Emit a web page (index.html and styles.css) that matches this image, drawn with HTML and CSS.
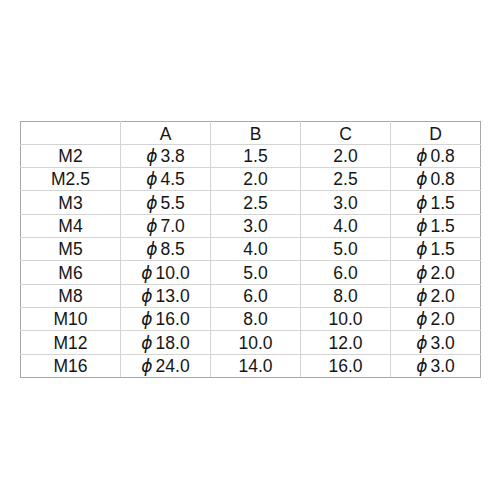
FILE: index.html
```html
<!DOCTYPE html>
<html lang="ja">
<head>
<meta charset="utf-8">
<title>Size table</title>
<link rel="stylesheet" href="styles.css">
</head>
<body>
<main class="page">
  <table class="spec">
    <colgroup>
      <col class="c-size"><col class="c-val"><col class="c-val"><col class="c-val"><col class="c-val">
    </colgroup>
    <thead>
      <tr><th></th><th>A</th><th>B</th><th>C</th><th>D</th></tr>
    </thead>
    <tbody>
      <tr><td>M2</td><td><span class="phi">ϕ</span>3.8</td><td>1.5</td><td>2.0</td><td><span class="phi">ϕ</span>0.8</td></tr>
      <tr><td>M2.5</td><td><span class="phi">ϕ</span>4.5</td><td>2.0</td><td>2.5</td><td><span class="phi">ϕ</span>0.8</td></tr>
      <tr><td>M3</td><td><span class="phi">ϕ</span>5.5</td><td>2.5</td><td>3.0</td><td><span class="phi">ϕ</span>1.5</td></tr>
      <tr><td>M4</td><td><span class="phi">ϕ</span>7.0</td><td>3.0</td><td>4.0</td><td><span class="phi">ϕ</span>1.5</td></tr>
      <tr><td>M5</td><td><span class="phi">ϕ</span>8.5</td><td>4.0</td><td>5.0</td><td><span class="phi">ϕ</span>1.5</td></tr>
      <tr><td>M6</td><td><span class="phi">ϕ</span>10.0</td><td>5.0</td><td>6.0</td><td><span class="phi">ϕ</span>2.0</td></tr>
      <tr><td>M8</td><td><span class="phi">ϕ</span>13.0</td><td>6.0</td><td>8.0</td><td><span class="phi">ϕ</span>2.0</td></tr>
      <tr><td>M10</td><td><span class="phi">ϕ</span>16.0</td><td>8.0</td><td>10.0</td><td><span class="phi">ϕ</span>2.0</td></tr>
      <tr><td>M12</td><td><span class="phi">ϕ</span>18.0</td><td>10.0</td><td>12.0</td><td><span class="phi">ϕ</span>3.0</td></tr>
      <tr><td>M16</td><td><span class="phi">ϕ</span>24.0</td><td>14.0</td><td>16.0</td><td><span class="phi">ϕ</span>3.0</td></tr>
    </tbody>
  </table>
</main>
</body>
</html>
```

FILE: styles.css
```css
html, body {
  margin: 0;
  padding: 0;
  background: #ffffff;
}

.page {
  padding: 121px 0 0 20px;
}

.spec {
  border-collapse: collapse;
  width: 460px;
  height: 257px;
  table-layout: fixed;
  border: 1px solid #a8a8a8;
  font-family: "Liberation Sans", Arial, sans-serif;
  font-size: 17.5px;
  color: #151515;
}

.c-size { width: 100px; }
.c-val { width: 90px; }

.spec th,
.spec td {
  border: 1px solid #d4d4d4;
  padding: 2px 0 0;
  text-align: center;
  vertical-align: middle;
  font-weight: normal;
  line-height: 1;
}

.spec th { padding-top: 4px; }

.spec thead th { border-top: 1px solid #a8a8a8; }
.spec tr > :first-child { border-left: 1px solid #a8a8a8; }
.spec tr > :last-child { border-right: 1px solid #a8a8a8; }
.spec tbody tr:last-child td { border-bottom: 1px solid #a8a8a8; }

.phi {
  font-family: "DejaVu Sans", sans-serif;
  font-style: oblique;
  font-size: 17px;
  margin-right: 3px;
}
```
